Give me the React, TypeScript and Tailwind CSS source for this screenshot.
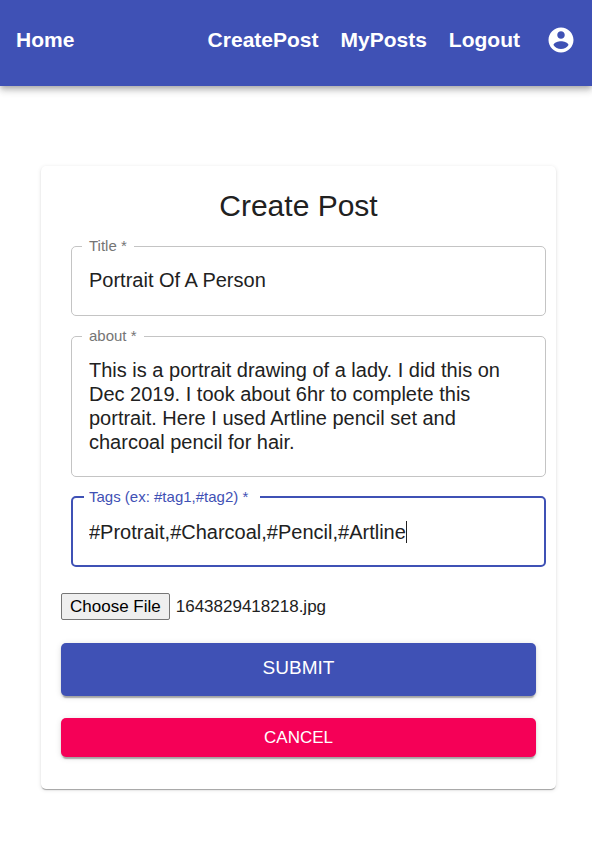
import { useEffect, useRef, type ReactNode } from "react";

const FILE_NAME = "1643829418218.jpg";

function AccountIcon() {
  return (
    <svg viewBox="0 0 24 24" className="size-[30px] fill-current" aria-hidden="true">
      <path d="M12 2C6.48 2 2 6.48 2 12s4.480 10 10 10 10-4.480 10-10S17.520 2 12 2zm0 3c1.660 0 3 1.340 3 3s-1.340 3-3 3-3-1.340-3-3 1.340-3 3-3zm0 14.200c-2.500 0-4.710-1.280-6-3.220.030-1.990 4-3.080 6-3.080 1.990 0 5.970 1.090 6 3.080-1.290 1.940-3.500 3.220-6 3.220z" />
    </svg>
  );
}

function NavBar() {
  return (
    <header className="flex h-[86px] items-start bg-[#3f51b5] px-4 pt-[25px] text-white shadow-[0_2px_5px_-1px_rgba(0,0,0,0.2),0_5px_6px_0_rgba(0,0,0,0.14),0_1px_12px_0_rgba(0,0,0,0.12)]">
      <nav className="flex h-[30px] w-full items-center gap-[22px] text-[21px] leading-[30px] font-bold">
        <a href="#home" className="mr-auto">Home</a>
        <a href="#create">CreatePost</a>
        <a href="#posts">MyPosts</a>
        <a href="#logout">Logout</a>
        <button type="button" aria-label="Account" className="ml-1">
          <AccountIcon />
        </button>
      </nav>
    </header>
  );
}

type FieldProps = {
  id: string;
  label: string;
  focused?: boolean;
  children: ReactNode;
};

function Field({ id, label, focused = false, children }: FieldProps) {
  return (
    <fieldset
      className={
        focused
          ? "rounded-[5px] border-2 border-[#3f51b5] pt-[13px] pr-4 pb-5 pl-[11px]"
          : "rounded-[5px] border border-[#c4c4c4] pt-3 pr-4 pb-[22px] pl-[10px]"
      }
    >
      <legend
        className={
          focused
            ? "pr-3 pl-[5px] text-[15px] leading-5 text-[#3f51b5]"
            : "pr-[7px] pl-[7px] text-[15px] leading-5 text-[#757575]"
        }
      >
        <label htmlFor={id}>{label}</label>
      </legend>
      <div className={focused ? "relative ml-[5px]" : "relative ml-[7px]"}>{children}</div>
    </fieldset>
  );
}

export default function App() {
  const fileRef = useRef<HTMLInputElement>(null);

  useEffect(() => {
    const transfer = new DataTransfer();
    transfer.items.add(new File([""], FILE_NAME, { type: "image/jpeg" }));
    if (fileRef.current) fileRef.current.files = transfer.files;
  }, []);

  return (
    <div className="bg-white font-['Liberation_Sans',Arial,sans-serif] text-[#212121]">
      <NavBar />
      <main className="pt-20 pr-9 pb-14 pl-[41px]">
        <form
          onSubmit={(e) => e.preventDefault()}
          className="rounded-[5px] bg-white px-5 pt-5 pb-8 shadow-[0_2px_1px_-1px_rgba(0,0,0,0.2),0_1px_1px_0_rgba(0,0,0,0.14),0_1px_4px_0_rgba(0,0,0,0.12)]"
        >
          <h1 className="text-center text-[30px] leading-10">Create Post</h1>

          <div className="mt-[10px] -mr-[10px] ml-[10px] flex flex-col gap-[10px]">
            <Field id="title" label="Title *">
              <input
                id="title"
                type="text"
                required
                defaultValue="Portrait Of A Person"
                className="block h-[25px] w-full text-xl leading-6 outline-none"
              />
            </Field>
            <Field id="about" label="about *">
              <textarea
                id="about"
                rows={4}
                required
                defaultValue="This is a portrait drawing of a lady. I did this on Dec 2019. I took about 6hr to complete this portrait. Here I used Artline pencil set and charcoal pencil for hair."
                className="block w-full resize-none overflow-hidden text-xl leading-6 outline-none"
              />
            </Field>
            <Field id="tags" label="Tags (ex: #tag1,#tag2) *" focused>
              <input
                id="tags"
                type="text"
                required
                autoFocus
                defaultValue="#Protrait,#Charcoal,#Pencil,#Artline"
                className="block h-[25px] w-full text-xl leading-6 caret-transparent outline-none"
              />
              <span className="absolute top-px left-[317px] h-[22px] w-px bg-[#212121]" />
            </Field>
          </div>

          <input
            ref={fileRef}
            type="file"
            aria-label="Post image"
            className="mt-[26px] block h-[27px] w-full text-[17px] leading-[27px] file:mr-[6px] file:h-[27px] file:rounded-[2px] file:border file:border-solid file:border-[#767676] file:bg-[#efefef] file:px-2 file:text-[17px] file:leading-[25px] file:text-black"
          />

          <button
            type="submit"
            className="mt-[23px] block h-[53px] w-full rounded-[5px] bg-[#3f51b5] pb-[2px] text-[19px] text-white shadow-[0_4px_1px_-2px_rgba(0,0,0,0.2),0_2px_2px_0_rgba(0,0,0,0.14),0_1px_6px_0_rgba(0,0,0,0.12)]"
          >
            SUBMIT
          </button>
          <button
            type="button"
            className="mt-[22px] block h-[39px] w-full rounded-[5px] bg-[#f50057] text-[17px] text-white shadow-[0_4px_1px_-2px_rgba(0,0,0,0.2),0_2px_2px_0_rgba(0,0,0,0.14),0_1px_6px_0_rgba(0,0,0,0.12)]"
          >
            CANCEL
          </button>
        </form>
      </main>
    </div>
  );
}
